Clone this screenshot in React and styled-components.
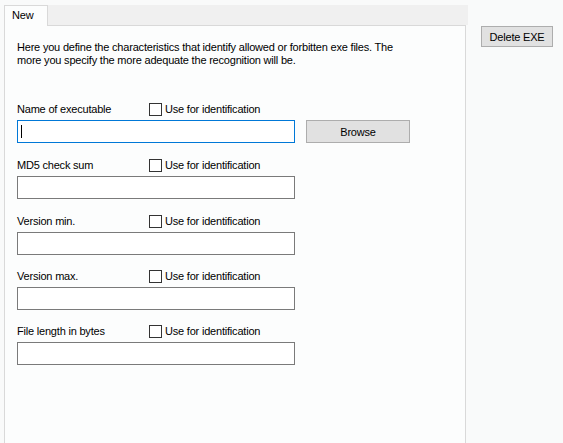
import React from "react";
import styled, { createGlobalStyle } from "styled-components";

const Global = createGlobalStyle`
  html, body { margin: 0; padding: 0; background: #f9fafa; height: 100%; overflow: hidden; }
  body { font-family: "Liberation Sans", Arial, sans-serif; font-size: 11px; letter-spacing: -0.2px; color: #000; }
  #root { height: 100%; }
`;

const Page = styled.div`
  display: flex;
  align-items: flex-start;
  height: 100%;
`;

const TabControl = styled.div`
  display: flex;
  flex-direction: column;
  width: 464px;
  margin: 5px 0 0 4px;
  height: calc(100% - 5px);
`;

const TabStrip = styled.div`
  display: flex;
  height: 20px;
  background: #f0f0f0;
`;

const Tab = styled.div`
  width: 44px;
  height: 21px;
  box-sizing: border-box;
  border: 1px solid #d9d9d9;
  border-bottom: none;
  background: #fcfdfd;
  padding: 3px 0 0 7px;
  position: relative;
  z-index: 1;
  line-height: 13px;
`;

const Panel = styled.div`
  flex: 1;
  width: 462px;
  box-sizing: border-box;
  border: 1px solid #d9d9d9;
  border-bottom: none;
  background: #fcfdfd;
  padding: 15px 0 0 12px;
  display: flex;
  flex-direction: column;
`;

const Intro = styled.p`
  margin: 0 0 34px;
  line-height: 13px;
  width: 420px;
`;

const Field = styled.div`
  display: flex;
  flex-direction: column;
  gap: 3px;
  margin-bottom: ${(p) => p.$gap}px;
`;

const LabelRow = styled.div`
  display: flex;
  align-items: center;
  height: 16px;
`;

const Label = styled.span`
  width: 132px;
  line-height: 13px;
`;

const Check = styled.label`
  display: flex;
  align-items: center;
  gap: 3px;
  line-height: 13px;
`;

const Box = styled.span`
  width: 13px;
  height: 13px;
  box-sizing: border-box;
  border: 1px solid #333;
  background: #fff;
`;

const InputRow = styled.div`
  display: flex;
  align-items: center;
  gap: 11px;
`;

const TextInput = styled.div`
  width: 278px;
  height: 23px;
  box-sizing: border-box;
  border: 1px solid ${(p) => (p.$focused ? "#0078d7" : "#7a7a7a")};
  background: #fff;
  display: flex;
  align-items: center;
  padding-left: 3px;
`;

const Caret = styled.span`
  width: 1px;
  height: 13px;
  background: #000;
`;

const Button = styled.button`
  box-sizing: border-box;
  background: #e1e1e1;
  border: 1px solid #adadad;
  font-family: "Liberation Sans", Arial, sans-serif;
  font-size: 11px;
  letter-spacing: -0.2px;
  color: #000;
  padding: 0;
  width: ${(p) => p.$w}px;
  height: ${(p) => p.$h}px;
  margin: ${(p) => p.$m || 0};
`;

const fields = [
  { label: "Name of executable", gap: 14, focused: true, browse: true },
  { label: "MD5 check sum", gap: 14 },
  { label: "Version min.", gap: 13 },
  { label: "Version max.", gap: 13 },
  { label: "File length in bytes", gap: 0 },
];

export default function App() {
  return (
    <Page>
      <Global />
      <TabControl>
        <TabStrip>
          <Tab>New</Tab>
        </TabStrip>
        <Panel>
          <Intro>
            Here you define the characteristics that identify allowed or forbitten exe files. The
            <br />
            more you specify the more adequate the recognition will be.
          </Intro>
          {fields.map((f) => (
            <Field key={f.label} $gap={f.gap}>
              <LabelRow>
                <Label>{f.label}</Label>
                <Check>
                  <Box />
                  Use for identification
                </Check>
              </LabelRow>
              <InputRow>
                <TextInput $focused={f.focused}>{f.focused && <Caret />}</TextInput>
                {f.browse && (
                  <Button $w={104} $h={23}>
                    Browse
                  </Button>
                )}
              </InputRow>
            </Field>
          ))}
        </Panel>
      </TabControl>
      <Button $w={72} $h={21} $m="26px 0 0 13px">
        Delete EXE
      </Button>
    </Page>
  );
}
